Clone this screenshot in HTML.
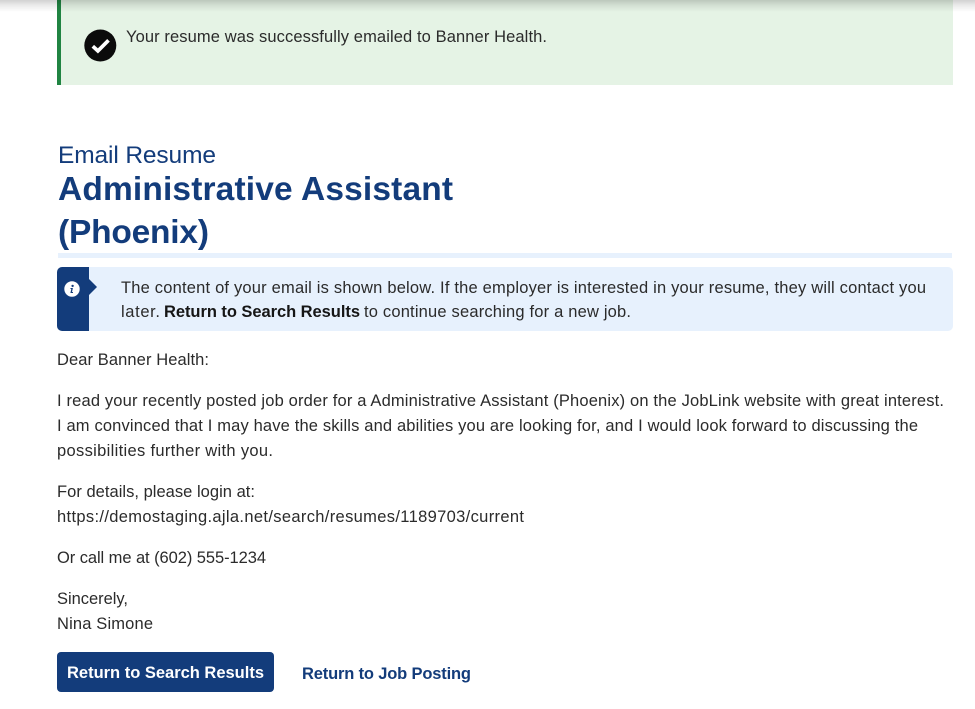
<!DOCTYPE html>
<html lang="en">
<head>
<meta charset="utf-8">
<title>Email Resume</title>
<style>
html,body{margin:0;padding:0;background:#fff;}
body{position:relative;width:975px;height:709px;overflow:hidden;font-family:"Liberation Sans",sans-serif;}
.abs{position:absolute;}
svg.t{position:absolute;left:0;top:0;width:975px;height:709px;}
svg.t text{font-family:"Liberation Sans",sans-serif;font-size:16.5px;fill:#2b2b2b;}
svg.t text.b{font-weight:700;fill:#161616;}
</style>
</head>
<body>
<div class="abs" style="left:57px;top:0;width:896px;height:85px;background:#e5f3e5;"></div>
<div class="abs" style="left:57px;top:0;width:4px;height:85px;background:#208442;"></div>
<div class="abs" style="left:0;top:0;width:975px;height:12px;background:linear-gradient(to bottom,rgba(0,0,0,.18),rgba(0,0,0,.08) 45%,rgba(0,0,0,0));"></div>
<svg class="abs" style="left:84px;top:29px;" width="33" height="33" viewBox="0 0 33 33"><circle cx="16.3" cy="16.5" r="16" fill="#0b0b0b"/><path d="M8.8 17.3l5.1 4.6 10.6-10.6" fill="none" stroke="#fff" stroke-width="3.7"/></svg>

<div class="abs" style="left:58px;top:253px;width:894px;height:5px;background:#e7f1fd;"></div>

<div class="abs" style="left:57px;top:267px;width:896px;height:64px;background:#e7f1fd;border-radius:5px;"></div>
<div class="abs" style="left:57px;top:267px;width:32px;height:64px;background:#133c7b;border-radius:5px 0 0 5px;"></div>
<svg class="abs" style="left:89px;top:279px;" width="8" height="16" viewBox="0 0 8 16"><path d="M0 0L8 8L0 16Z" fill="#133c7b"/></svg>
<svg class="abs" style="left:64px;top:281px;" width="16" height="16" viewBox="0 0 16 16"><circle cx="8" cy="8" r="7.7" fill="#fff"/><path d="M6.6 7h2.3l-.9 4h1v1H6.4l.9-4h-.9z" fill="#133c7b"/><circle cx="8.6" cy="4.9" r="1.2" fill="#133c7b"/></svg>

<div class="abs" style="left:57px;top:652px;width:217px;height:40px;background:#133c7b;border-radius:4px;"></div>

<svg class="t" viewBox="0 0 975 709">
<text x="126" y="42" textLength="421">Your resume was successfully emailed to Banner Health.</text>
<text x="58" y="163" textLength="158" style="font-size:24.5px;fill:#133c7b">Email Resume</text>
<text class="b" x="58" y="200" textLength="395" style="font-size:33.5px;fill:#133c7b">Administrative Assistant</text>
<text class="b" x="58" y="243" textLength="151" style="font-size:33.5px;fill:#133c7b">(Phoenix)</text>

<text x="121" y="293" textLength="805">The content of your email is shown below. If the employer is interested in your resume, they will contact you</text>
<text x="121" y="317" textLength="39">later.</text>
<text class="b" x="164" y="317" textLength="196">Return to Search Results</text>
<text x="364" y="317" textLength="267">to continue searching for a new job.</text>

<text x="57" y="365" textLength="152">Dear Banner Health:</text>
<text x="57" y="406" textLength="887">I read your recently posted job order for a Administrative Assistant (Phoenix) on the JobLink website with great interest.</text>
<text x="57" y="431" textLength="861">I am convinced that I may have the skills and abilities you are looking for, and I would look forward to discussing the</text>
<text x="57" y="456" textLength="216">possibilities further with you.</text>
<text x="57" y="497" textLength="198">For details, please login at:</text>
<text x="57" y="522" textLength="467">https://demostaging.ajla.net/search/resumes/1189703/current</text>
<text x="57" y="563" textLength="209">Or call me at (602) 555-1234</text>
<text x="57" y="604" textLength="71">Sincerely,</text>
<text x="57" y="629" textLength="96">Nina Simone</text>
<text class="b" x="67" y="678" textLength="197" style="fill:#fff">Return to Search Results</text>
<text class="b" x="302" y="679" textLength="169" style="fill:#133c7b">Return to Job Posting</text>
</svg>
</body>
</html>
